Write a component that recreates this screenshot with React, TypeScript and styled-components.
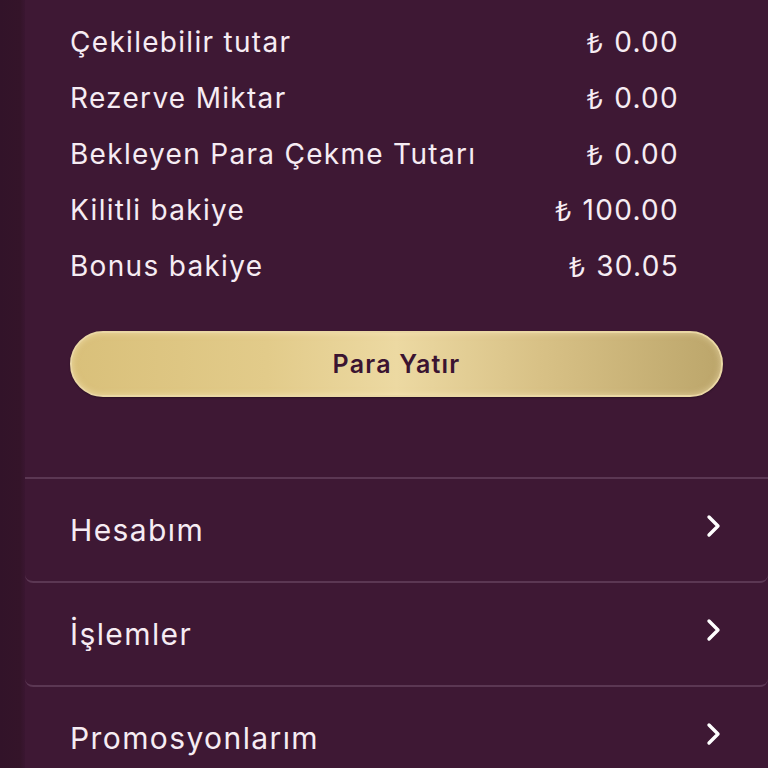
import React from "react";
import styled, { createGlobalStyle } from "styled-components";

const GlobalStyle = createGlobalStyle`
    html, body {
        margin: 0;
        padding: 0;
        background: #3e1834;
        overflow: hidden;
    }
    * {
        box-sizing: border-box;
    }
`;

const SPage = styled.div`
    display: flex;
    height: 768px;
    font-family: Inter, "Noto Sans", sans-serif;
    color: #f6ecf3;
`;

const SSideStrip = styled.div`
    width: 25px;
    flex-shrink: 0;
    background: linear-gradient(to right, #321329 0px, #341429 20px, #3a1631 25px);
`;

const SPanel = styled.div`
    flex: 1;
    display: flex;
    flex-direction: column;
    background: #3e1834;
`;

const SBalanceCard = styled.div`
    padding: 14px 45px 80px 45px;
    border-bottom: 2px solid #5b3753;
`;

const SBalanceList = styled.div`
    display: flex;
    flex-direction: column;
    padding-right: 44px;
`;

const SBalanceRow = styled.div`
    display: flex;
    justify-content: space-between;
    align-items: center;
    height: 56px;
    font-size: 28px;
    letter-spacing: 1.3px;
`;

const SLabel = styled.span`
    font-weight: 400;
`;

const SValue = styled.span`
    font-weight: 400;
    white-space: nowrap;
    display: flex;
    align-items: center;
`;

const SLira = styled.span`
    font-family: "Noto Sans", "DejaVu Sans", sans-serif;
    font-size: 28px;
    margin-right: 10px;
`;

const SDepositButton = styled.button`
    margin-top: 37px;
    width: 100%;
    height: 66px;
    border-radius: 33px;
    border: 2px solid #ead7a4;
    background: linear-gradient(
        to right,
        #d9c07a 0%,
        #e2cb8a 30%,
        #ecd9a2 50%,
        #d8c186 72%,
        #bca66b 100%
    );
    box-shadow: inset 0 0 6px rgba(255, 240, 200, 0.5), 0 1px 2px rgba(0, 0, 0, 0.3);
    font-family: Inter, "Noto Sans", sans-serif;
    font-weight: 600;
    font-size: 25px;
    letter-spacing: 1.2px;
    color: #3b1431;
    cursor: pointer;
`;

const SMenu = styled.div`
    display: flex;
    flex-direction: column;
`;

const SMenuItem = styled.div`
    display: flex;
    justify-content: space-between;
    align-items: center;
    height: 104px;
    padding: 0 46px 0 45px;
    border-bottom: 2px solid #5b3753;
    border-radius: 0 0 8px 8px;
    font-size: 30px;
    letter-spacing: 1.4px;
    font-weight: 400;
`;

const SChevron = styled.svg`
    width: 16px;
    height: 24px;
    margin-top: -8px;
`;

const balances = [
    { label: "Çekilebilir tutar", value: "0.00" },
    { label: "Rezerve Miktar", value: "0.00" },
    { label: "Bekleyen Para Çekme Tutarı", value: "0.00" },
    { label: "Kilitli bakiye", value: "100.00" },
    { label: "Bonus bakiye", value: "30.05" },
];

const menu = ["Hesabım", "İşlemler", "Promosyonlarım"];

const Chevron: React.FC = () => (
    <SChevron viewBox="0 0 16 24" fill="none">
        <path d="M3 3 L12 12 L3 21" stroke="#ffffff" strokeWidth="3.4" strokeLinecap="round" strokeLinejoin="round" />
    </SChevron>
);

export default function App() {
    return (
        <>
            <GlobalStyle />
            <SPage>
                <SSideStrip />
                <SPanel>
                    <SBalanceCard>
                        <SBalanceList>
                            {balances.map((b) => (
                                <SBalanceRow key={b.label}>
                                    <SLabel>{b.label}</SLabel>
                                    <SValue>
                                        <SLira>₺</SLira>
                                        {b.value}
                                    </SValue>
                                </SBalanceRow>
                            ))}
                        </SBalanceList>
                        <SDepositButton>Para Yatır</SDepositButton>
                    </SBalanceCard>
                    <SMenu>
                        {menu.map((m) => (
                            <SMenuItem key={m}>
                                <span>{m}</span>
                                <Chevron />
                            </SMenuItem>
                        ))}
                    </SMenu>
                </SPanel>
            </SPage>
        </>
    );
}
